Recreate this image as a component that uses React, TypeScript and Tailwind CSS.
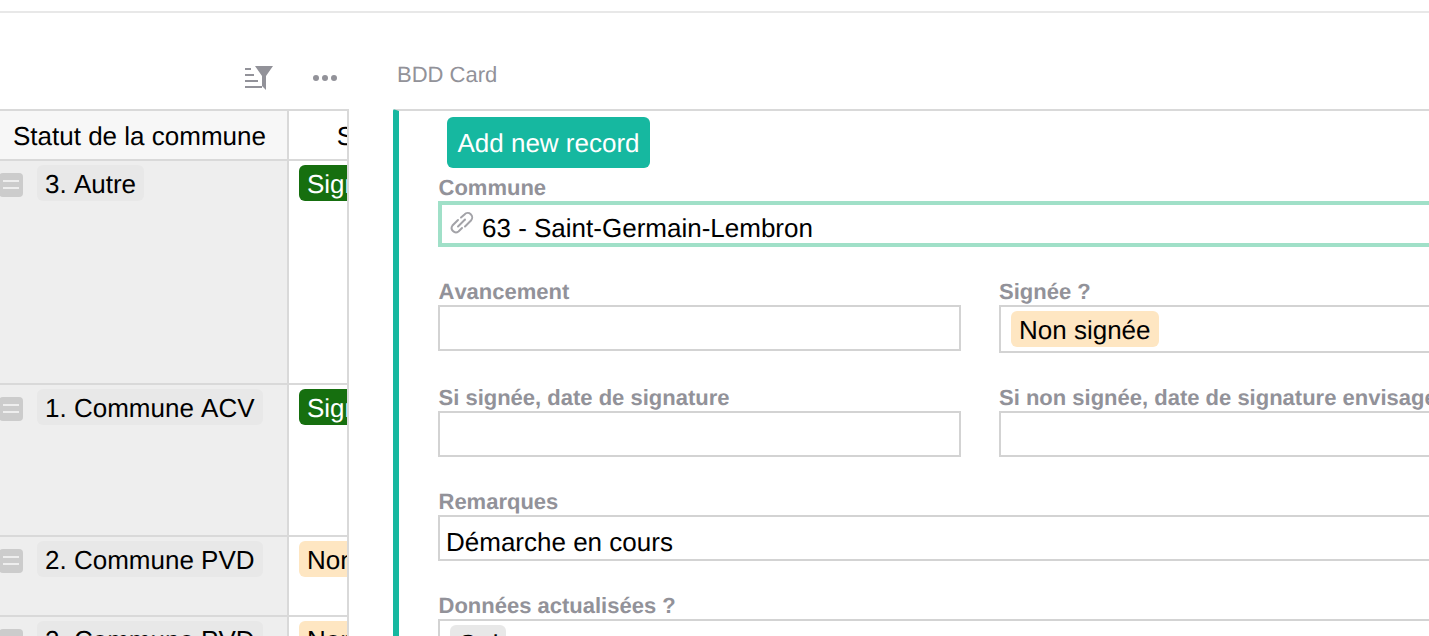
import React from "react";

const rows = [
  { statut: "3. Autre", signee: "Signée", ok: true, height: "h-[224px]" },
  { statut: "1. Commune ACV", signee: "Signée", ok: true, height: "h-[152px]" },
  { statut: "2. Commune PVD", signee: "Non signée", ok: false, height: "h-[80px]" },
  { statut: "2. Commune PVD", signee: "Non signée", ok: false, height: "h-[80px]" },
];

function Label({ children, flush }: { children: React.ReactNode; flush?: boolean }) {
  return (
    <div className={`h-[24px] pt-[1px] text-[22px] leading-[20px] font-bold whitespace-nowrap text-[#929299] ${flush ? "" : "pl-[0.5px]"}`}>
      {children}
    </div>
  );
}

function Field({ label, children, tall, flush }: { label: string; children?: React.ReactNode; tall?: boolean; flush?: boolean }) {
  return (
    <div className="mt-[34px] min-w-0">
      <Label flush={flush}>{label}</Label>
      <div
        className={`border-2 border-[#d3d3d3] text-black ${tall ? "h-[48px]" : "h-[46px]"}`}
      >
        {children}
      </div>
    </div>
  );
}

function Chip({ children, className }: { children: React.ReactNode; className: string }) {
  return (
    <div className={`h-[36px] shrink-0 rounded-[6px] px-2 text-[26px] leading-[38px] whitespace-nowrap ${className}`}>
      {children}
    </div>
  );
}

export default function App() {
  return (
    <div className="h-[636px] w-[1429px] overflow-hidden bg-white font-['Liberation_Sans',sans-serif] text-black [font-kerning:none] [text-rendering:geometricPrecision]">
      <div className="h-[13px] border-b-2 border-[#e8e8e8]" />
      <div className="flex">
        {/* Tableau */}
        <div className="w-[349px] shrink-0">
          <div className="flex h-[96px] items-center justify-end gap-[40px] pr-[12px] pt-[36px] pb-[2px]">
            <svg width="28" height="24" viewBox="0 0 28 24" fill="#929299">
              <rect x="0" y="2" width="6" height="2" />
              <rect x="0" y="8" width="9" height="2" />
              <rect x="0" y="14" width="13" height="2" />
              <rect x="0" y="20" width="17" height="2" />
              <path d="M10 0H28L21 10V24L17 20V10Z" />
            </svg>
            <div className="flex gap-[3px]">
              <div className="h-[6px] w-[6px] rounded-full bg-[#929299]" />
              <div className="h-[6px] w-[6px] rounded-full bg-[#929299]" />
              <div className="h-[6px] w-[6px] rounded-full bg-[#929299]" />
            </div>
          </div>
          <div className="overflow-hidden border-t-2 border-r-2 border-[#d9d9d9]">
            <div className="flex h-[50px] border-b-2 border-[#d9d9d9] text-[26px] leading-[50px]">
              <div className="w-[289px] shrink-0 border-r-2 border-[#d9d9d9] bg-[#f7f7f7] pl-[13px] whitespace-nowrap">
                Statut de la commune
              </div>
              <div className="w-[198px] shrink-0 text-center whitespace-nowrap">Signée ?</div>
            </div>
            {rows.map((row, i) => (
              <div key={i} className={`flex border-b-2 border-[#d9d9d9] ${row.height}`}>
                <div className="flex w-[289px] shrink-0 gap-[14px] border-r-2 border-[#d9d9d9] bg-[#eeeeee] pt-[4px]">
                  <div className="-ml-[1px] mt-[8px] flex h-[24px] w-[24px] shrink-0 flex-col items-center gap-[5px] rounded-[4px] bg-[#cccccc] pt-[7px]">
                    <div className="h-[2px] w-[16px] bg-[#eeeeee]" />
                    <div className="h-[2px] w-[16px] bg-[#eeeeee]" />
                  </div>
                  <Chip className="bg-[#e8e8e8]">{row.statut}</Chip>
                </div>
                <div className="w-[198px] shrink-0 pt-[4px] pl-[10px]">
                  <div className="flex">
                    <Chip className={row.ok ? "bg-[#166f0f] text-white" : "bg-[#fee6c2]"}>{row.signee}</Chip>
                  </div>
                </div>
              </div>
            ))}
          </div>
        </div>

        {/* Carte */}
        <div className="ml-[44px] w-[1036px] shrink-0">
          <div className="flex h-[96px] items-center pl-[4px] pt-[26px] text-[22px] text-[#929299]">BDD Card</div>
          <div className="h-[540px] rounded-tl-[2px] border-t-2 border-l-[6px] border-t-[#d9d9d9] border-l-[#16b8a0] pt-[6px] pl-[39px]">
            <div className="w-[1084px]">
              <div className="ml-[9px] flex h-[51px] w-[203px] items-center justify-center rounded-[6px] bg-[#16b8a0] pt-[2px] text-[26px] text-white">
                Add new record
              </div>
              <div className="mt-[9px]">
                <Label>Commune</Label>
              </div>
              <div className="flex h-[46px] items-center border-4 border-[#a0e0c8] pl-[7px] text-[26px]">
                <svg
                  width="26"
                  height="24"
                  viewBox="0 0 26 24"
                  fill="none"
                  stroke="#a3a3a8"
                  strokeWidth="2"
                  strokeLinecap="round"
                  className="shrink-0 -translate-y-[1px]"
                >
                  <path d="M12 6.5L15.5 3.5A4.3 4.3 0 0 1 22 9.5L16 15.5" />
                  <path d="M13 17L9.5 20.5A4.3 4.3 0 0 1 3.5 14.5L9 9" />
                  <path d="M9 15.5L16 8.5" />
                </svg>
                <span className="ml-[7px] translate-y-[4px] whitespace-nowrap">63 - Saint-Germain-Lembron</span>
              </div>

              <div className="grid grid-cols-2 gap-x-[38px]">
                <Field label="Avancement" />
                <Field label="Signée ?" tall flush>
                  <div className="flex pt-[4px] pl-[10px]">
                    <Chip className="bg-[#fee6c2]">Non signée</Chip>
                  </div>
                </Field>
                <Field label="Si signée, date de signature" />
                <Field label="Si non signée, date de signature envisagée" flush />
              </div>

              <Field label="Remarques">
                <div className="pl-[6px] text-[26px] leading-[46px] whitespace-nowrap pt-[2px]">Démarche en cours</div>
              </Field>
              <Field label="Données actualisées ?" tall>
                <div className="flex pt-[4px] pl-[10px]">
                  <Chip className="bg-[#e8e8e8]">Oui</Chip>
                </div>
              </Field>
            </div>
          </div>
        </div>
      </div>
    </div>
  );
}
